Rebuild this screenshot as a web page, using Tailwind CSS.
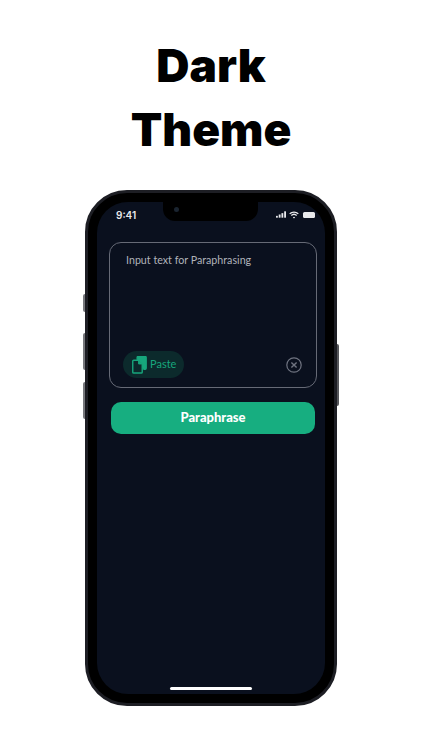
<!DOCTYPE html>
<html lang="en">
<head>
    <meta charset="UTF-8">
    <title>Dark Theme</title>
    <meta name="viewport" content="width=device-width, initial-scale=1.0">
    <script src="https://cdn.jsdelivr.net/npm/@tailwindcss/browser@4"></script>
</head>
<body class="bg-white">
<div class="w-[422px] h-[750px] overflow-hidden flex flex-col items-center font-['Lato',sans-serif]">

    <!-- heading -->
    <h1 class="mt-[33px] text-center text-[46px] leading-[64px] font-black text-black font-['Inter',sans-serif]">Dark<br>Theme</h1>

    <!-- phone -->
    <div class="relative mt-[29px] w-[252px] h-[516px] rounded-[42px] bg-black border-[3px] border-[#1d1e24] p-[9px]">
        <div class="absolute left-[-5px] top-[101px] w-[2px] h-[18px] bg-[#77787c] rounded-l"></div>
        <div class="absolute left-[-5px] top-[140px] w-[2px] h-[37px] bg-[#77787c] rounded-l"></div>
        <div class="absolute left-[-5px] top-[189px] w-[2px] h-[37px] bg-[#77787c] rounded-l"></div>
        <div class="absolute right-[-5px] top-[151px] w-[2px] h-[62px] bg-[#55565a] rounded-r"></div>

        <div class="relative w-full h-full rounded-[31px] bg-[#0a101e] overflow-hidden">
            <!-- notch -->
            <div class="absolute left-[66px] top-0 w-[95px] h-[19px] bg-black rounded-b-[12px]">
                <div class="absolute left-[11px] top-[5px] w-[5px] h-[5px] rounded-full bg-[#1a2430]"></div>
            </div>

            <!-- status bar -->
            <div class="flex items-center justify-between pl-[19px] pr-[10px] pt-[4px] h-[21px]">
                <span class="text-[10px] font-semibold text-[#e8e9ec] font-['Inter',sans-serif] leading-none">9:41</span>
                <div class="flex items-center gap-[3px]">
                    <svg width="10" height="7" viewBox="0 0 11 7" fill="#e8e9ec"><rect x="0" y="5" width="2" height="2"/><rect x="3" y="3.5" width="2" height="3.5"/><rect x="6" y="2" width="2" height="5"/><rect x="9" y="0" width="2" height="7"/></svg>
                    <svg width="10" height="8" viewBox="0 0 10 8" fill="none" stroke="#e8e9ec" stroke-width="1.3"><path d="M.7 2.8a6.2 6.2 0 0 1 8.6 0"/><path d="M2.3 4.5a3.9 3.9 0 0 1 5.4 0"/><path d="M5 7.6 3.8 6.2a1.8 1.8 0 0 1 2.4 0z" fill="#e8e9ec" stroke="none"/></svg>
                    <div class="w-[12px] h-[6px] rounded-[1.5px] bg-[#e8e9ec] ml-[1px]"></div>
                </div>
            </div>

            <div class="pl-[12px] pt-[19px]">
                <!-- input box -->
                <div class="w-[208px] h-[146px] rounded-[12px] border border-[#666a76] flex flex-col justify-between pt-[9px] pb-[9px] pl-[13px] pr-[14px]">
                    <p class="pl-[3px] text-[10.7px] leading-[16px] text-[#b0b3ba]">Input text for Paraphrasing</p>
                    <div class="flex items-center justify-between">
                        <div class="flex items-center gap-[3px] h-[27px] w-[61px] rounded-full bg-[#0c2a2c] pl-[9px]">
                            <svg width="15" height="18" viewBox="0 0 16 19" fill="none" stroke="#17a67c" stroke-width="1.5" stroke-linejoin="round"><path d="M5.5 4V1.5a1 1 0 0 1 1-1h7.6a1 1 0 0 1 1 1v11.5a1 1 0 0 1-1 1h-2" fill="#17a67c"/><path d="M1.8 4.5h5.5l3.6 3.6v9a1 1 0 0 1-1 1H1.8a1 1 0 0 1-1-1V5.5a1 1 0 0 1 1-1z" fill="#0c2a2c"/><path d="M7 4.8v3.6h3.6" fill="#17a67c" stroke-width="1"/></svg>
                            <span class="text-[11px] text-[#17a67c]">Paste</span>
                        </div>
                        <svg width="16" height="16" viewBox="0 0 16 16" fill="none" stroke="#6f7380" stroke-width="1.2"><circle cx="8" cy="8" r="7.2"/><path d="M5.4 5.4l5.2 5.2M10.6 5.4l-5.2 5.2" stroke-width="1.4"/></svg>
                    </div>
                </div>

                <!-- button -->
                <button class="block mt-[14px] ml-[2px] w-[204px] h-[32px] pb-[2px] rounded-[10px] bg-[#17ae80] text-white text-[13px] font-black leading-none">Paraphrase</button>
            </div>

            <!-- home indicator -->
            <div class="absolute left-[73px] bottom-[4px] w-[82px] h-[3px] rounded-full bg-white"></div>
        </div>
    </div>
</div>
</body>
</html>
